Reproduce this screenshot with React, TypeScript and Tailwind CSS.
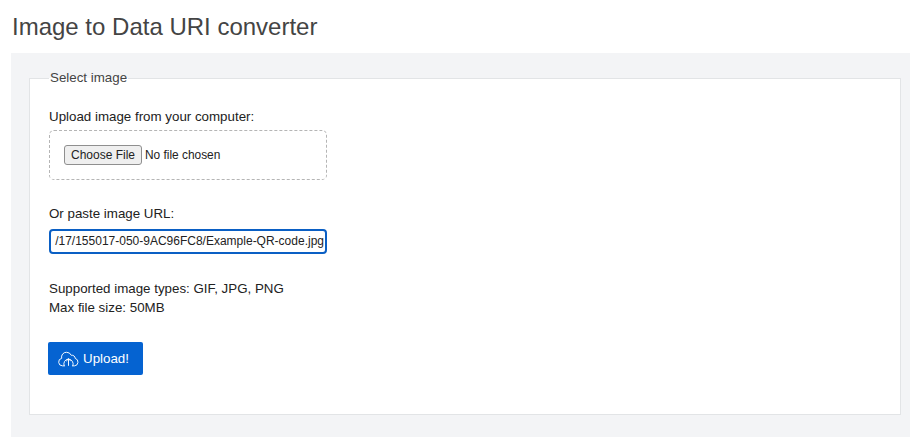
const font = "font-['Liberation_Sans',Arial,sans-serif]"

function CloudUpload() {
  return (
    <svg className="h-[19px] w-[21px] flex-shrink-0" viewBox="0 0 24 22" fill="none" stroke="currentColor" strokeWidth="1.1" strokeLinecap="round" strokeLinejoin="round">
      <path d="M7 19.5H5a4.4 4.4 0 0 1-.9-8.7 5.6 5.6 0 0 1 5.6-7 6 6 0 0 1 5.5 3.5 3.8 3.8 0 0 1 4.6 3.6 4.4 4.4 0 0 1-.8 8.6h-2" />
      <path d="M7 19.5a5.5 5.5 0 1 1 10 0" />
      <path d="M12 19v-7.5M9.6 13.8l2.4-2.4 2.4 2.4" />
    </svg>
  )
}

export default function App() {
  return (
    <div className={`${font} h-[437px] w-[910px] overflow-hidden bg-white text-[13.33px] leading-[19px] text-[#222]`}>
      <h1 className="pl-3 pt-[12px] h-[53px] text-[24px] leading-[30px] font-normal text-[#444]">
        Image to Data URI converter
      </h1>
      <div className="ml-[11px] h-[384px] bg-[#f3f4f6] pl-[18px] pr-[9px] pt-[17px]">
        <fieldset className="h-[345px] border border-[#e2e4e6] bg-white pl-[19px] pr-4">
          <legend className="px-[1px] text-[13.33px] leading-[16px] text-[#444]">Select image</legend>

          <div className="mt-[21px]">Upload image from your computer:</div>
          <div className="mt-[4px] flex h-[50px] w-[278px] items-center gap-[3px] rounded-[5px] border border-dashed border-[#b5b5b5] pl-[14px]">
            <button className="h-[20px] w-[78px] rounded-[3px] border border-[#8f8f8f] bg-[#efefef] text-[12px] leading-[18px] text-[#222]">
              Choose File
            </button>
            <span className="text-[11.9px]">No file chosen</span>
          </div>

          <div className="mt-[24px]">Or paste image URL:</div>
          <div className="mt-[6px] flex h-[25px] w-[278px] items-center justify-end overflow-hidden whitespace-nowrap rounded-[4px] border-2 border-[#0a5fc4] pr-[1px] text-[12px]">
            /17/155017-050-9AC96FC8/Example-QR-code.jpg
          </div>

          <div className="mt-[25px]">Supported image types: GIF, JPG, PNG</div>
          <div>Max file size: 50MB</div>

          <button className="-ml-[1px] mt-[25px] flex h-[33px] w-[95px] items-center gap-[4px] rounded-[2px] bg-[#0563d1] pl-[10px] text-[13.33px] font-normal text-white">
            <CloudUpload />
            Upload!
          </button>
        </fieldset>
      </div>
    </div>
  )
}
